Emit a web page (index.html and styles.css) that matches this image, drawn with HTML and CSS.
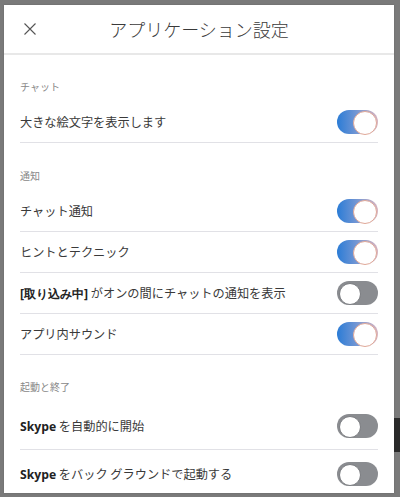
FILE: index.html
```html
<!DOCTYPE html>
<html lang="ja">
<head>
<meta charset="utf-8">
<link rel="stylesheet" href="styles.css">
</head>
<body>
<div class="backdrop-bar"></div>
<div class="modal">
  <header class="head">
    <button class="close" aria-label="閉じる">
      <svg width="12" height="12" viewBox="0 0 12 12"><path d="M0.5 0.5 L11.5 11.5 M11.5 0.5 L0.5 11.5" stroke="#555" stroke-width="1.1" fill="none"/></svg>
    </button>
    <h1 class="title">アプリケーション設定</h1>
  </header>
  <div class="content">
    <section class="section">
      <div class="label">チャット</div>
      <div class="row"><span>大きな絵文字を表示します</span><span class="toggle on"></span></div>
    </section>
    <section class="section">
      <div class="label">通知</div>
      <div class="row"><span>チャット通知</span><span class="toggle on"></span></div>
      <div class="row"><span>ヒントとテクニック</span><span class="toggle on"></span></div>
      <div class="row"><span><b>[取り込み中]</b> がオンの間にチャットの通知を表示</span><span class="toggle"></span></div>
      <div class="row"><span>アプリ内サウンド</span><span class="toggle on"></span></div>
    </section>
    <section class="section last">
      <div class="label">起動と終了</div>
      <div class="row tall"><span><b>Skype</b> を自動的に開始</span><span class="toggle"></span></div>
      <div class="row tall"><span><b>Skype</b> をバック グラウンドで起動する</span><span class="toggle"></span></div>
    </section>
  </div>
</div>
</body>
</html>
```

FILE: styles.css
```css
* { box-sizing: border-box; }
html, body { margin: 0; height: 100%; overflow: hidden; }
body {
  background: #7a7a7a;
  padding: 5px 6px 0 4px;
  font-family: "Noto Sans CJK JP", "Noto Sans", sans-serif;
  color: #333;
  position: relative;
}
.backdrop-bar {
  position: absolute;
  right: 0;
  top: 418px;
  width: 6px;
  height: 34px;
  background: #2a2a2a;
}
.modal {
  background: #fff;
  height: 488px;
  overflow: hidden;
  box-shadow: 0 0 2px rgba(0,0,0,0.15);
}
.head {
  height: 50px;
  border-bottom: 2px solid #e8e8e8;
  display: flex;
  align-items: center;
  justify-content: center;
  position: relative;
}
.close {
  position: absolute;
  left: 15px;
  top: 13px;
  width: 22px;
  height: 22px;
  padding: 0;
  border: 0;
  background: none;
  display: flex;
  align-items: center;
  justify-content: center;
}
.title {
  margin: 0;
  font-size: 18px;
  font-weight: 300;
  color: #3a3a3a;
  line-height: 24px;
}
.content {
  padding: 0 16px;
}
.section {
  padding-top: 25px;
}
.section + .section { padding-top: 26px; }
.section.last { padding-top: 25px; }
.label {
  font-size: 10px;
  line-height: 14px;
  color: #888;
  margin-bottom: 8px;
}
.row {
  height: 41px;
  border-bottom: 1px solid #e1e1e6;
  display: flex;
  align-items: center;
  justify-content: space-between;
  font-size: 12.2px;
  color: #3a3a3a;
}
.row.tall { height: 48px; }
.row b {
  font-family: "Open Sans", "Noto Sans", sans-serif;
  font-weight: 700;
  color: #222;
}
.toggle {
  width: 41px;
  height: 24px;
  border-radius: 12px;
  background: #8a8c90;
  position: relative;
  flex: none;
}
.toggle::after {
  content: "";
  position: absolute;
  top: 2px;
  left: 2px;
  width: 20px;
  height: 20px;
  border-radius: 50%;
  background: #fff;
  border: 1px solid #7a7c80;
}
.toggle.on {
  background: linear-gradient(to right, #2b7cd6 0%, #6f95d4 45%, #d8b4c0 100%);
}
.toggle.on::after {
  left: auto;
  right: 1px;
  top: 1px;
  width: 22px;
  height: 22px;
  border: 1px solid #e0a898;
}
```
